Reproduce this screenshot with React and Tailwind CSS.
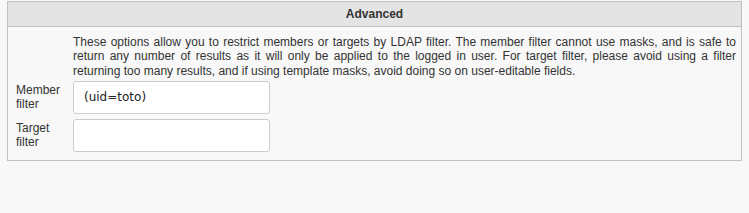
export default function App() {
  const fields = [
    { label: ["Member", "filter"], value: "(uid=toto)" },
    { label: ["Target", "filter"], value: "" },
  ];

  return (
    <div className="min-h-[213px] bg-[#f8f8f8] pt-px font-['Liberation_Sans',Arial,sans-serif] text-[12px] text-[#333]">
      <div className="ml-[7px] w-[735px] border border-[#c0c0c0] bg-[#f8f8f8]">
        <div className="h-[25px] border-b border-[#c0c0c0] bg-[#e4e4e4] text-center text-[12px] font-bold leading-[25px] text-[#333]">
          Advanced
        </div>
        <div className="pb-[8px] pl-[8px] pr-[5px] pt-[8px]">
          <p className="ml-[57px] text-justify leading-[14.3px]">
            These options allow you to restrict members or targets by LDAP filter. The member filter cannot use masks, and is safe to return any number of results as it will only be applied to the logged in user. For target filter, please avoid using a filter returning too many results, and if using template masks, avoid doing so on user-editable fields.
          </p>
          <div className="mt-[3px] flex flex-col gap-[5px]">
            {fields.map((f) => (
              <div key={f.label[0]} className="flex items-start">
                <div className="w-[57px] pt-[2px] leading-[14px]">
                  {f.label[0]}
                  <br />
                  {f.label[1]}
                </div>
                <input
                  defaultValue={f.value}
                  className="h-[33px] w-[197px] rounded-[3px] border border-[#cfcbc6] bg-white px-[10px] font-['DejaVu_Sans',sans-serif] text-[12px] text-[#222] outline-none"
                />
              </div>
            ))}
          </div>
        </div>
      </div>
    </div>
  );
}
